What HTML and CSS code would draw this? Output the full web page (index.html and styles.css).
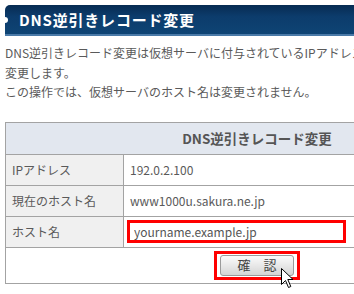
FILE: index.html
```html
<!DOCTYPE html>
<html lang="ja">
<head>
    <meta charset="UTF-8">
    <title>DNS逆引きレコード変更</title>
    <link rel="stylesheet" href="styles.css">
</head>
<body>

<div class="page">
    <h2 class="page-title">DNS逆引きレコード変更</h2>

    <p class="lead">
        DNS逆引きレコード変更は仮想サーバに付与されているIPアドレスのホスト名を<br>
        変更します。<br>
        この操作では、仮想サーバのホスト名は変更されません。
    </p>

    <table class="form-table">
        <tr>
            <th colspan="2">DNS逆引きレコード変更</th>
        </tr>
        <tr>
            <td class="label">IPアドレス</td>
            <td>192.0.2.100</td>
        </tr>
        <tr>
            <td class="label">現在のホスト名</td>
            <td>www1000u.sakura.ne.jp</td>
        </tr>
        <tr>
            <td class="label">ホスト名</td>
            <td class="input-cell"><input type="text" class="host-input" value="yourname.example.jp"></td>
        </tr>
        <tr>
            <td colspan="2" class="button-cell">
                <span class="mark"><button class="confirm-btn">確　認</button></span>
            </td>
        </tr>
    </table>

    <!-- mouse pointer -->
    <svg class="pointer" width="13" height="22" viewBox="0 0 13 22">
        <path d="M0.5 0.5 L0.5 16.5 L4.5 12.5 L7.5 19.5 L9.8 18.5 L6.8 11.5 L12 11.5 Z" fill="#fff" stroke="#000" stroke-width="1"/>
    </svg>
</div>

</body>
</html>
```

FILE: styles.css
```css
/* General Styling */
* {
    box-sizing: border-box;
    margin: 0;
    padding: 0;
}

html, body {
    overflow: hidden;
}

body {
    background: #fff;
    font-family: "Noto Sans CJK JP", "Noto Sans", sans-serif;
    font-size: 12px;
    color: #5a5a5a;
}

.page {
    position: relative;
    width: 504px;
    margin: 5px;
}

.page-title {
    position: relative;
    height: 31px;
    padding-left: 14px;
    background: linear-gradient(#072b52, #0c3c6c 40%, #0e4474);
    border-bottom: 2px solid #4a7aa8;
    border-top-left-radius: 5px;
    color: #fff;
    font-size: 15px;
    font-weight: bold;
    letter-spacing: 0.8px;
    line-height: 30px;
}

/* little notch on the left edge */
.page-title::before {
    content: "";
    position: absolute;
    left: -3px;
    top: 12px;
    width: 6px;
    height: 6px;
    border-radius: 50%;
    background: #fff;
}

.lead {
    margin-top: 7px;
    line-height: 19.5px;
    white-space: nowrap;
}

.form-table {
    width: 504px;
    margin-top: 20px;
    border-collapse: collapse;
}

.form-table th,
.form-table td {
    border: 1px solid #a3a3a3;
    height: 31px;
    padding: 0 6px;
    text-align: left;
}

.form-table th {
    height: 32px;
    background: #e2e7ef;
    font-size: 13.5px;
    text-align: center;
    color: #555;
}

.form-table .label {
    width: 118px;
    background: #f0f0f0;
}

.input-cell {
    padding-left: 3px !important;
}

.host-input {
    display: block;
    width: 219px;
    height: 23px;
    padding: 0 4px;
    border: 3px solid #f00;
    font-family: "Noto Sans CJK JP", "Noto Sans", sans-serif;
    font-size: 12px;
    color: #555;
    outline: none;
}

.button-cell {
    height: 36px !important;
    padding: 3px 0 0 0 !important;
    text-align: center !important;
    vertical-align: top;
}

.mark {
    display: inline-block;
    padding: 1px 3px;
    border: 3px solid #f00;
}

.confirm-btn {
    display: block;
    width: 74px;
    height: 21px;
    border: 1px solid #9a9a9a;
    border-radius: 3px;
    background: linear-gradient(#fbfbfb, #e6e6e6 55%, #d4d4d4);
    font-family: "Noto Sans CJK JP", sans-serif;
    font-size: 13px;
    color: #444;
    line-height: 18px;
}

.pointer {
    position: absolute;
    left: 276px;
    top: 263px;
}
```
